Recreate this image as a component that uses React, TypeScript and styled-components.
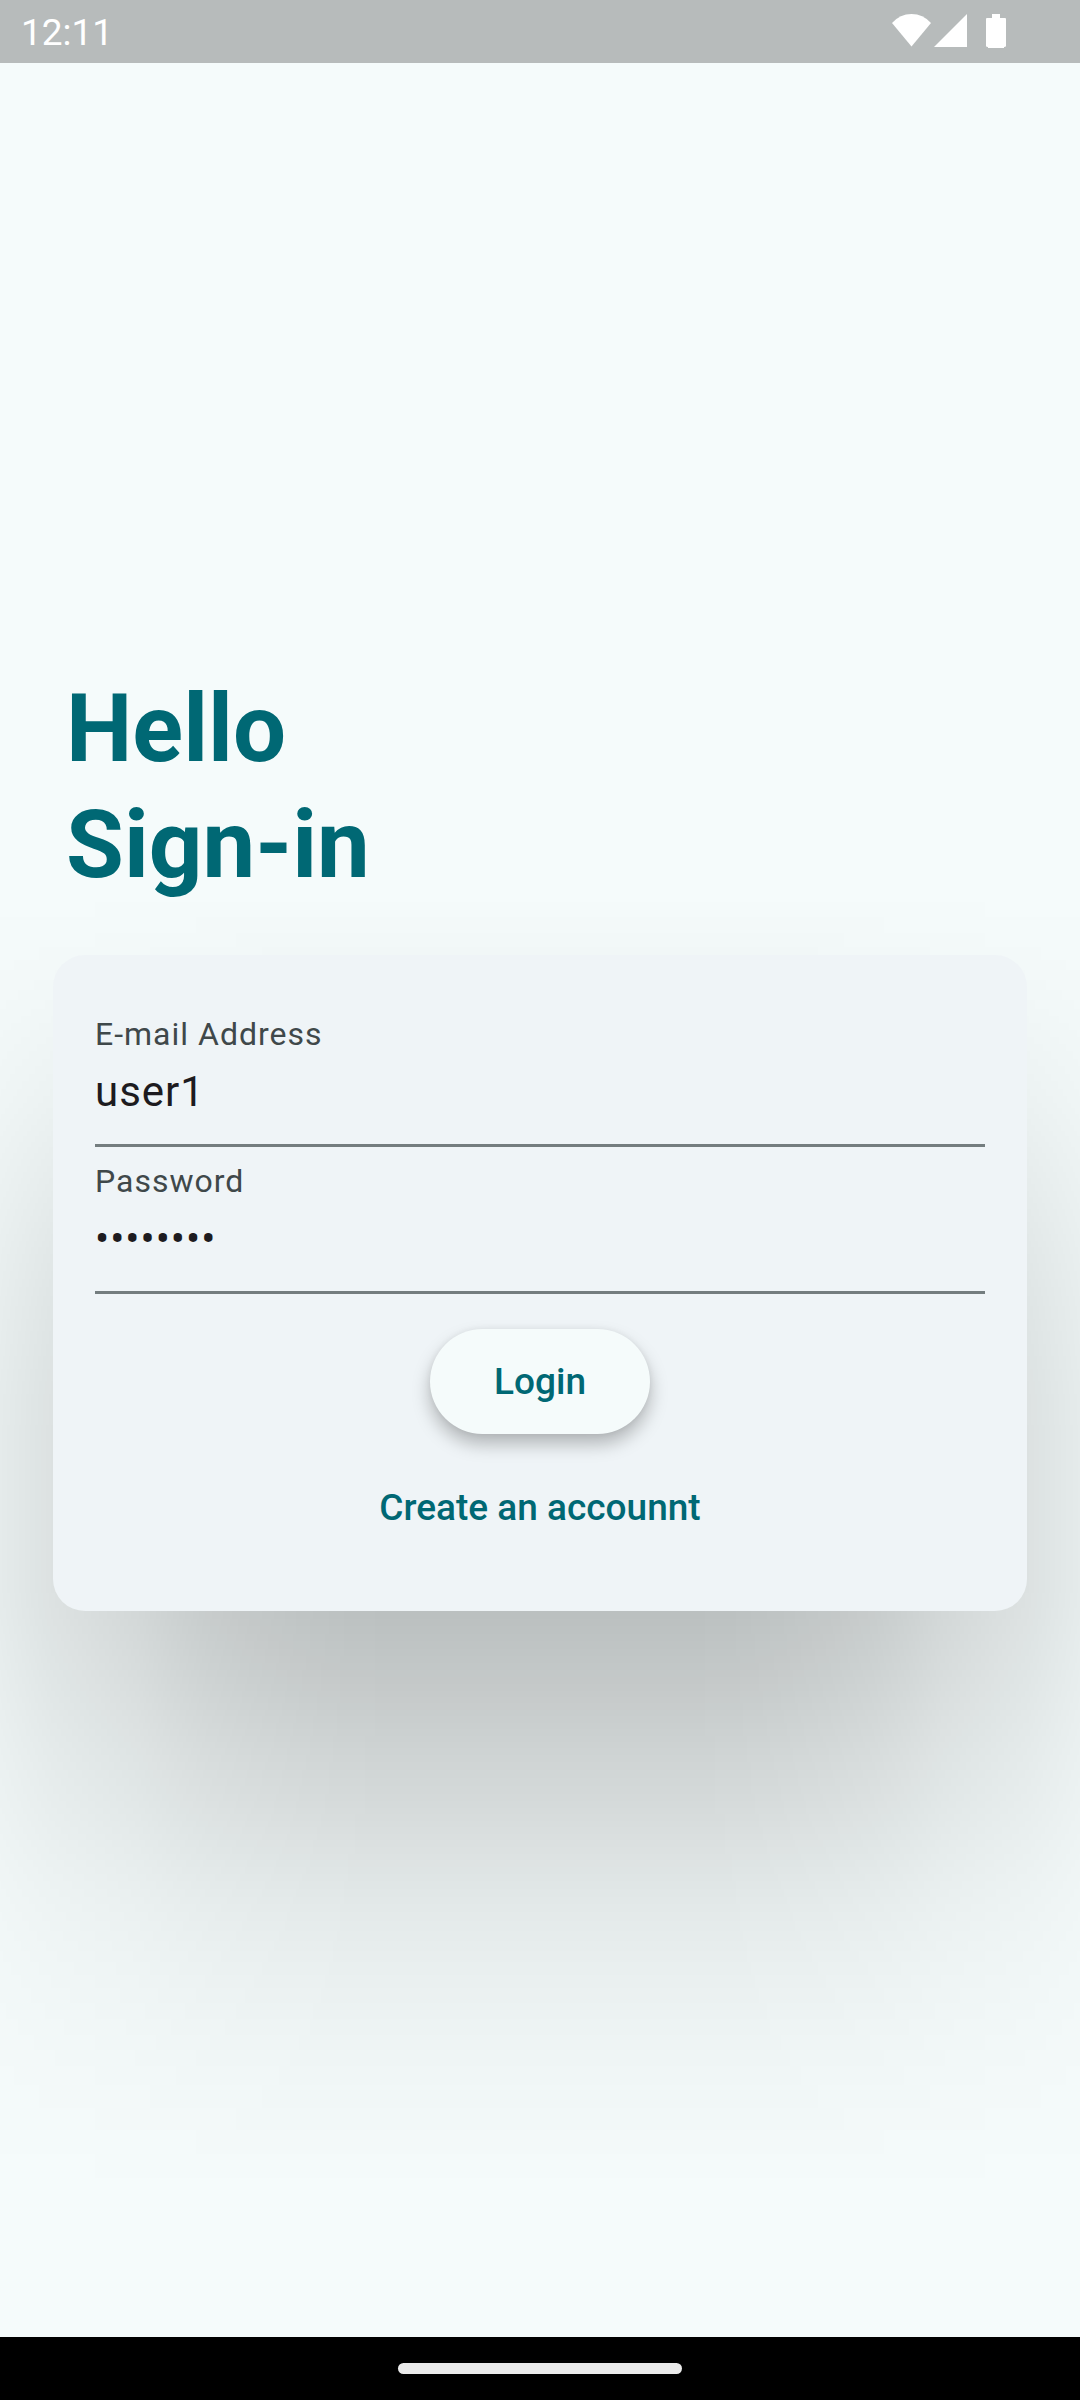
import React, { useState } from "react";
import styled, { createGlobalStyle } from "styled-components";

const GlobalStyle = createGlobalStyle`
  *, *::before, *::after { box-sizing: border-box; }
  body {
    margin: 0;
    background: #f5fbfb;
    font-family: Roboto, "Liberation Sans", sans-serif;
  }
  button, input { font: inherit; }
`;

const Screen = styled.div`
  display: flex;
  flex-direction: column;
  min-height: 100vh;
  background: #f5fbfb;
`;

const StatusBar = styled.header`
  display: flex;
  align-items: flex-start;
  justify-content: space-between;
  height: 63px;
  padding: 14px 74px 0 21px;
  background: #b7bbbb;
  color: #fff;
`;

const Clock = styled.time`
  font-size: 37px;
  line-height: 38px;
`;

const StatusIcons = styled.svg`
  display: block;
  width: 114px;
  height: 34px;
  fill: #fff;
`;

const Main = styled.main`
  flex: 1;
  display: flex;
  flex-direction: column;
  justify-content: center;
  gap: 52px;
  padding: 0 53px 118px;
  overflow: hidden;
  isolation: isolate;
`;

const Title = styled.h1`
  margin: 0;
  padding: 0 13px;
  color: #006874;
  font-size: 94px;
  font-weight: 700;
  line-height: 116px;
`;

const TitleLine = styled.span`
  display: block;
`;

/* Soft drop shadow: a vertical falloff multiplied by a horizontal one,
   given as [distance in px, strength from 0 to 1]. */
const verticalFalloff: [number, number][] = [
  [0, 0], [30, 0.03], [60, 0.07], [110, 0.15], [160, 0.25], [205, 0.36],
  [255, 0.49], [305, 0.63], [355, 0.75], [405, 0.85], [455, 0.92],
  [505, 0.97], [555, 0.99], [640, 1], [690, 0.99], [720, 0.96],
  [750, 0.9], [786, 0.82], [863, 0.63], [903, 0.54], [942, 0.45],
  [982, 0.36], [1021, 0.28], [1061, 0.21], [1100, 0.16], [1179, 0.08],
  [1246, 0.03], [1296, 0],
];

const horizontalFalloff: [number, number][] = [
  [0, 0], [50, 0.06], [97, 0.14], [147, 0.26], [199, 0.41], [247, 0.51],
  [285, 0.59], [319, 0.69], [354, 0.78], [397, 0.86], [447, 0.93],
  [497, 0.98], [547, 1],
];

const SHADOW_ALPHA = 0.245;

const verticalStops = verticalFalloff
  .map(([y, v]) => `rgba(0, 0, 0, ${(v * SHADOW_ALPHA).toFixed(4)}) ${y}px`)
  .join(", ");

const horizontalStops = [
  ...horizontalFalloff.map(([x, v]) => `rgba(0, 0, 0, ${v}) ${x}px`),
  ...[...horizontalFalloff]
    .reverse()
    .map(([x, v]) => `rgba(0, 0, 0, ${v}) calc(100% - ${x}px)`),
].join(", ");

const Card = styled.form`
  position: relative;
  display: flex;
  flex-direction: column;
  padding: 58px 42px 51px;
  border-radius: 32px;
  background: #eff4f7;

  &::before {
    content: "";
    position: absolute;
    z-index: -1;
    inset: -60px -200px -580px;
    background: linear-gradient(to bottom, ${verticalStops});
    mask-image: linear-gradient(to right, ${horizontalStops});
    pointer-events: none;
  }
`;

const Fields = styled.div`
  display: flex;
  flex-direction: column;
  gap: 13px;
`;

const Field = styled.div`
  display: flex;
  flex-direction: column;
  gap: 5px;
  padding-bottom: 21px;
  border-bottom: 3px solid #747d7f;
`;

const Label = styled.label`
  color: #3f484a;
  font-size: 32px;
  line-height: 42px;
  letter-spacing: 1px;
`;

const Input = styled.input`
  width: 100%;
  height: 63px;
  padding: 0;
  border: 0;
  outline: 0;
  background: transparent;
  color: #1d1b20;
  font-size: 42px;
  line-height: 63px;
  letter-spacing: 1px;
`;

const Actions = styled.div`
  display: flex;
  flex-direction: column;
  align-items: center;
  gap: 21px;
  padding-top: 35px;
`;

const Button = styled.button<{ $raised?: boolean }>`
  height: 105px;
  padding: 0 ${(p) => (p.$raised ? 64 : 32)}px;
  border: 0;
  border-radius: 53px;
  background: ${(p) => (p.$raised ? "#f5fbfb" : "transparent")};
  box-shadow: ${(p) =>
    p.$raised
      ? "0 10px 18px rgba(0, 0, 0, 0.26), 0 0 6px rgba(0, 0, 0, 0.06)"
      : "none"};
  color: #006874;
  font-size: 37px;
  font-weight: 500;
  line-height: 53px;
  cursor: pointer;
`;

const NavBar = styled.footer`
  display: flex;
  align-items: center;
  justify-content: center;
  height: 63px;
  background: #000;
`;

const HomeHandle = styled.div`
  width: 284px;
  height: 11px;
  border-radius: 6px;
  background: #ebebeb;
`;

export default function App() {
  const [email, setEmail] = useState("user1");
  const [password, setPassword] = useState("password");

  return (
    <>
      <GlobalStyle />
      <Screen>
        <StatusBar>
          <Clock>12:11</Clock>
          <StatusIcons viewBox="0 0 114 34" aria-hidden="true">
            <path d="M19.500 32.500 L0 9 Q8 0 19.500 0 T39 9 Z" />
            <path d="M75 0 V33 H42 Z" />
            <path d="M100 0 H108 V4 H113 Q114 4 114 5 V32 Q114 33 112 33 V34 H96 V33 Q94 33 94 32 V5 Q94 4 95 4 H100 Z" />
          </StatusIcons>
        </StatusBar>
        <Main>
          <Title>
            <TitleLine>Hello</TitleLine>
            <TitleLine>Sign-in</TitleLine>
          </Title>
          <Card onSubmit={(e) => e.preventDefault()}>
            <Fields>
              <Field>
                <Label htmlFor="email">E-mail Address</Label>
                <Input
                  id="email"
                  type="text"
                  value={email}
                  onChange={(e) => setEmail(e.target.value)}
                />
              </Field>
              <Field>
                <Label htmlFor="password">Password</Label>
                <Input
                  id="password"
                  type="password"
                  value={password}
                  onChange={(e) => setPassword(e.target.value)}
                />
              </Field>
            </Fields>
            <Actions>
              <Button type="submit" $raised>
                Login
              </Button>
              <Button type="button">Create an accounnt</Button>
            </Actions>
          </Card>
        </Main>
        <NavBar>
          <HomeHandle />
        </NavBar>
      </Screen>
    </>
  );
}
